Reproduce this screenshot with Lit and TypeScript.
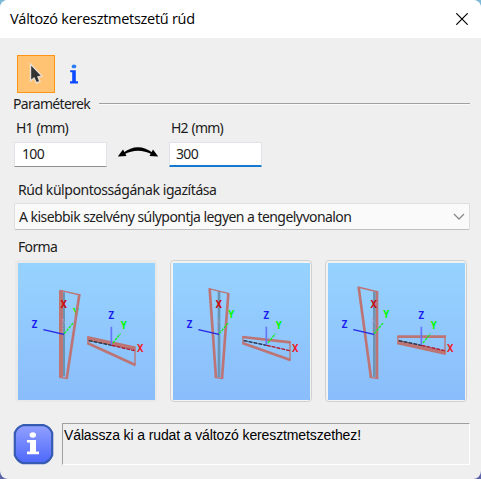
import { LitElement, html, svg, css, SVGTemplateResult } from "lit";
import { customElement, property, state } from "lit/decorators.js";

type Shape = "top" | "center" | "bottom";

const BEAMS: Record<Shape, { column: SVGTemplateResult; beam: SVGTemplateResult }> = {
  top: {
    column: svg`
      <path class="web" d="M161 112V364"/>
      <path class="steel wide" d="M153 106V368"/>
      <path class="steel" d="M208 119L170 371"/>
      <path class="steel thin" d="M150 106L211 120M148 367L173 371"/>`,
    beam: svg`
      <path class="steel wide" d="M232 249L376 280"/>
      <path class="steel" d="M232 264L376 330"/>
      <path class="steel thin" d="M234 243V266M375 276V332"/>`,
  },
  center: {
    column: svg`
      <path class="web" d="M162 108V366"/>
      <path class="steel" d="M134 101L153 368M190 116L171 371"/>
      <path class="steel thin" d="M131 101L193 116M149 367L174 371"/>`,
    beam: svg`
      <path class="steel" d="M232 246L377 262M232 264L376 315"/>
      <path class="steel thin" d="M234 243V266M375 259V318"/>`,
  },
  bottom: {
    column: svg`
      <path class="web" d="M163 110V366"/>
      <path class="steel" d="M116 97L153 368"/>
      <path class="steel" d="M171 110V371"/>
      <path class="steel thin" d="M113 96L175 111M149 367L175 371"/>`,
    beam: svg`
      <path class="steel" d="M232 245H378"/>
      <path class="steel wide" d="M232 262L377 294"/>
      <path class="steel thin" d="M234 243V266M375 242V298"/>`,
  },
};

@customElement("shape-card")
class ShapeCard extends LitElement {
  @property() shape: Shape = "top";
  @property({ type: Boolean, reflect: true }) selected = false;

  static styles = css`
    :host { display: block; box-sizing: border-box; width: 142px; height: 142px; padding: 2px 1px 1px 2px; border: 1px solid #d0d0d0; border-radius: 4px; background: #f3f3f3; }
    :host([selected]) { border-color: #e8e8e8; background: #e9e9e9; }
    svg { display: block; width: 137px; height: 137px; background: linear-gradient(#97d3ff, #8abdfb); }
    path { fill: none; }
    .steel { stroke: #bd7474; stroke-width: 8; }
    .wide { stroke-width: 12; }
    .thin { stroke-width: 4; }
    .web { stroke: #6b93b2; stroke-width: 8; }
    .blue { stroke: #2525e6; stroke-width: 4; }
    .soft { stroke: #6575fa; stroke-width: 5; }
    .green { stroke: #10ef20; stroke-width: 4; stroke-dasharray: 8 3; }
    .ghost { stroke: #b69fc2; stroke-width: 3; stroke-dasharray: 5 4; }
    .black { stroke: #20202c; stroke-width: 4; stroke-dasharray: 12 3; }
    .red { stroke: #b01528; stroke-width: 4; stroke-dasharray: 12 3; }
    text { font: bold 29px "Noto Sans", sans-serif; text-anchor: middle; }
    .x { fill: #f02028; }
    .x.dark { fill: #cc0808; }
    .y { fill: #00f800; }
    .z { fill: #1a1af0; }
  `;

  render() {
    const { column, beam } = BEAMS[this.shape];
    const first = this.shape === "top";
    return html`<svg viewBox="24 24 411 411">
      ${first ? svg`<text class="y" x="198" y="184">Y</text>` : ""}
      ${column}
      <path class="ghost" d="M158 232V190L164 204" />
      <path class="blue" d="M100 224L162 238" />
      <path class="green" d="M163 236L191 202" />
      <text class="z" x="74" y="218">Z</text>
      <text class="x dark" x="161" y="159">X</text>
      ${first ? "" : svg`<text class="y" x="199" y="189">Y</text>`}
      ${beam}
      <path class="black" d="M236 257L305 271" />
      <path class="red" d="M305 271L374 287" />
      <path class="soft" d="M304 215V269" />
      <path class="green" d="M309 264L331 236" />
      <text class="z" x="304" y="192">Z</text>
      <text class="y" x="341" y="222">Y</text>
      <text class="x" x="391" y="292">X</text>
    </svg>`;
  }
}

@customElement("app-root")
class AppRoot extends LitElement {
  @state() private selected: Shape = "top";

  static styles = css`
    :host { display: block; width: 481px; height: 479px; background: linear-gradient(#7fb9d8 50%, #5b62a8 50%); font: 14px/18px "Noto Sans", sans-serif; color: #1c1c1c; }
    .window { box-sizing: border-box; height: 479px; display: flex; flex-direction: column; background: #efefef; border-radius: 8px; overflow: hidden; white-space: nowrap; }
    .titlebar { flex: none; height: 38px; display: flex; align-items: center; justify-content: space-between; padding: 0 13px 0 10px; background: #fff; color: #000; }
    .title { font: 14.5px/20px "Open Sans", sans-serif; letter-spacing: -0.28px; }
    .content { padding: 17px 11px 0 13px; }
    .tools { display: flex; height: 38px; padding-left: 4px; }
    .tool { box-sizing: border-box; width: 38px; height: 38px; display: grid; place-items: center; }
    .tool.active { border: 1px solid #ff9315; background: #ffc373; }
    .group { display: flex; align-items: center; height: 20px; margin-top: 1px; }
    .group .rule { flex: 1; height: 1px; margin-left: 9px; background: #a0a0a0; border-bottom: 1px solid #fafafa; }
    .text { letter-spacing: -0.68px; }
    .fields { display: flex; margin-top: 5px; padding-left: 1px; }
    .field { width: 93px; }
    .caption { display: block; padding-left: 2px; height: 18px; letter-spacing: -0.8px; word-spacing: 1px; }
    .box { box-sizing: border-box; height: 25px; margin-top: 5px; padding: 2px 7px; background: #fff; border: 1px solid #dfe3e8; border-bottom: 1px solid #8e8e8e; border-radius: 1px; }
    .box.focus { padding-left: 6px; border-bottom: 2px solid #1479cf; }
    .swap { width: 62px; margin-top: 27px; }
    .label { display: block; margin-left: 5px; }
    .align { margin-top: 14px; letter-spacing: -0.44px; }
    .select { box-sizing: border-box; height: 27px; margin: 4px 0 0 1px; padding: 0 4px 0 4px; display: flex; align-items: center; justify-content: space-between; background: #fafafa; border: 1px solid #dedede; border-bottom-color: #c0c0c0; border-radius: 2px; }
    .select .text { letter-spacing: -0.55px; }
    .form { margin-top: 8px; }
    .cards { display: flex; gap: 13px; margin: 4px 0 0 2px; }
    .status { display: flex; margin-top: 21px; }
    .message { box-sizing: border-box; flex: 1; height: 42px; margin-left: 8px; padding: 2px 0 0 1px; border: 1px solid; border-color: #a0a0a0 #fff #fff #a0a0a0; font: 14px/18px "Liberation Sans", sans-serif; letter-spacing: -0.12px; color: #000; }
    svg { display: block; }
    .swap svg { margin: 0 auto; }
  `;

  render() {
    return html`<div class="window">
      <div class="titlebar">
        <span class="title">Változó keresztmetszetű rúd</span>
        <svg width="12" height="12" viewBox="0 0 12 12"><path d="M.3 .3L11.7 11.7M11.7 .3L.3 11.7" stroke="#000" stroke-width="1.2" /></svg>
      </div>
      <div class="content">
        <div class="tools">
          <div class="tool active">
            <svg width="16" height="24" viewBox="0 0 16 24">
              <path d="M2.5 2V19L6 16L8.5 21L12 19.5L10 15L14 14Z" fill="#333" stroke="#e9dfd5" stroke-width="1.4" />
            </svg>
          </div>
          <div class="tool">
            <svg width="10" height="22" viewBox="0 0 10 22">
              <ellipse cx="5" cy="3.4" rx="2.3" ry="1.9" fill="#267df5" />
              <path d="M1.2 7.3H6.8V18.3H9V20.5H1V18.3H3.2V9.3H1.2Z" fill="#0b49ff" />
            </svg>
          </div>
        </div>
        <div class="group"><span class="text">Paraméterek</span><span class="rule"></span></div>
        <div class="fields">
          <div class="field"><span class="caption">H1 (mm)</span><div class="box text">100</div></div>
          <div class="swap">
            <svg width="42" height="13" viewBox="0 0 42 13">
              <path d="M6 7Q21 -4.5 36 7L35 8.5Q21 1 7 8.5Z" fill="#000" />
              <path d="M.8 10.5L6 3.5L9.5 10ZM41.2 10.5L36 3.5L32.5 10Z" fill="#000" />
            </svg>
          </div>
          <div class="field"><span class="caption">H2 (mm)</span><div class="box text focus">300</div></div>
        </div>
        <span class="label text align">Rúd külpontosságának igazítása</span>
        <div class="select">
          <span class="text">A kisebbik szelvény súlypontja legyen a tengelyvonalon</span>
          <svg width="12" height="7" viewBox="0 0 12 7"><path d="M1 1L6 6L11 1" fill="none" stroke="#8a8a8a" stroke-width="1.3" /></svg>
        </div>
        <span class="label text form">Forma</span>
        <div class="cards">
          ${(["top", "center", "bottom"] as Shape[]).map(
            (s) => html`<shape-card .shape=${s} ?selected=${s === this.selected} @click=${() => (this.selected = s)}></shape-card>`
          )}
        </div>
        <div class="status">
          <svg width="41" height="42" viewBox="0 0 41 42">
            <defs><linearGradient id="g" x2="0" y2="1"><stop stop-color="#93a0ff" /><stop offset="1" stop-color="#4c68fb" /></linearGradient></defs>
            <path d="M10 2.2H31Q37 4 39.2 10V32Q37 38 31 40.2H10Q4 38 1.8 32V10Q4 4 10 2.2Z" fill="url(#g)" stroke="#355bb3" stroke-width="2.2" stroke-linejoin="round" />
            <ellipse cx="19.8" cy="12" rx="3.2" ry="2.8" fill="#fff" />
            <path d="M14 17H23V28.5H26V31.3H14V28.5H17V19.6H14Z" fill="#fff" />
          </svg>
          <div class="message">Válassza ki a rudat a változó keresztmetszethez!</div>
        </div>
      </div>
    </div>`;
  }
}
